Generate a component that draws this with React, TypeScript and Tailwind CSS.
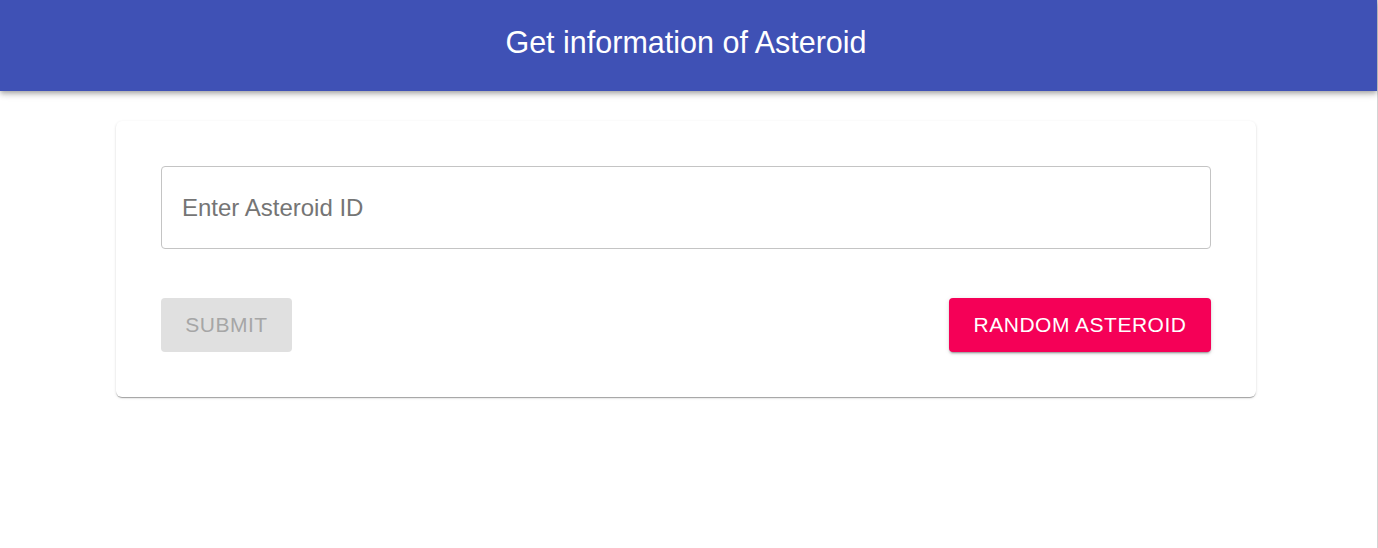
export default function App() {
  return (
    <div className="w-[1378px] h-[548px] bg-white flex" style={{ fontFamily: '"Liberation Sans", Arial, sans-serif' }}>
      <div className="w-[1377px] h-full flex flex-col">
        <header className="h-[91px] bg-[#3f51b5] flex items-center justify-center pb-[6px] shadow-[0_2px_4px_-1px_rgba(0,0,0,0.2),0_4px_5px_0_rgba(0,0,0,0.14),0_1px_10px_0_rgba(0,0,0,0.12)] relative z-10">
          <h1 className="text-white text-[30.5px] leading-none ml-[-5px]">Get information of Asteroid</h1>
        </header>
        <div className="pt-[30px] pl-[116px]">
          <div className="w-[1140px] bg-white rounded-[6px] p-[45px] shadow-[0_2px_1px_-1px_rgba(0,0,0,0.2),0_1px_1px_0_rgba(0,0,0,0.14),0_1px_3px_0_rgba(0,0,0,0.12)]">
            <div className="h-[83px] border border-[#c4c4c4] rounded-[4px] flex items-center px-[20px]">
              <span className="text-[24px] text-[#757575]">Enter Asteroid ID</span>
            </div>
            <div className="mt-[49px] flex justify-between">
              <button className="h-[54px] w-[131px] rounded-[4px] bg-[#e0e0e0] text-[#a6a6a6] text-[21px] tracking-[0.5px]">SUBMIT</button>
              <button className="h-[54px] w-[262px] rounded-[4px] bg-[#f50057] text-white text-[21px] tracking-[0.5px] shadow-[0_3px_1px_-2px_rgba(0,0,0,0.2),0_2px_2px_0_rgba(0,0,0,0.14),0_1px_5px_0_rgba(0,0,0,0.12)]">RANDOM ASTEROID</button>
            </div>
          </div>
        </div>
      </div>
      <div className="w-px h-full bg-[#d4d4d4]" />
    </div>
  );
}
